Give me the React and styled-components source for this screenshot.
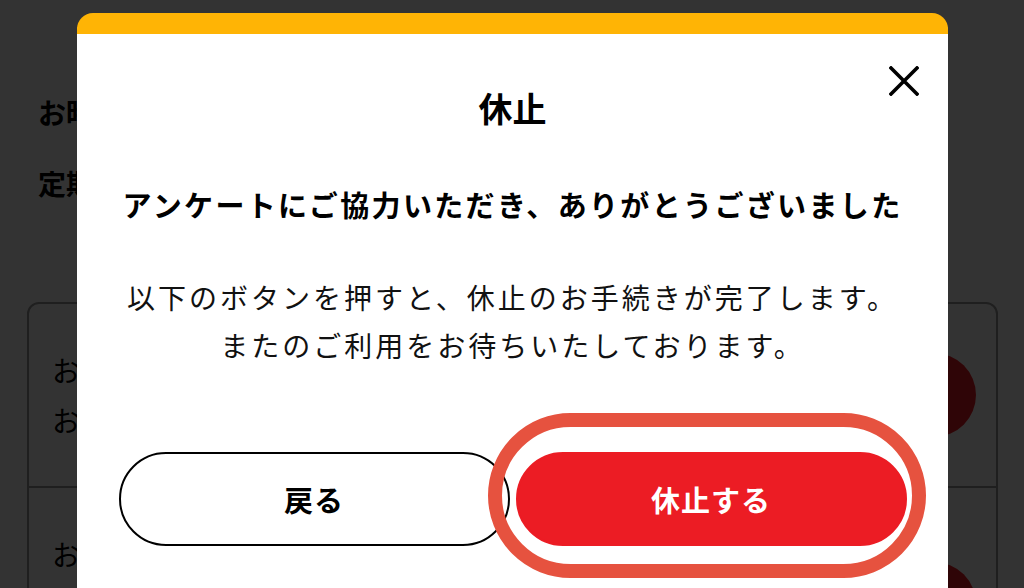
import React from "react";
import styled, { createGlobalStyle } from "styled-components";

const Global = createGlobalStyle`
  html, body { margin: 0; padding: 0; background: #fff; overflow: hidden; }
  body { font-family: "Noto Sans CJK JP", "Noto Sans", sans-serif; color: #000; }
  * { box-sizing: border-box; }
`;

const Page = styled.main`
  width: 1024px;
  height: 588px;
  padding: 92px 26px 0 27px;
  display: flex;
  flex-direction: column;
  overflow: hidden;
`;

const PageLine = styled.p`
  margin: 0 0 31px 11px;
  font-size: 28px;
  line-height: 40px;
  font-weight: 700;
  white-space: nowrap;
`;

const Card = styled.section`
  margin-top: 68px;
  border: 2px solid #999;
  border-radius: 12px;
  overflow: hidden;
  flex: none;
`;

const Row = styled.div`
  display: flex;
  align-items: center;
  justify-content: space-between;
  padding: 41px 20px 41px 23px;
  border-top: ${(p) => (p.$first ? "none" : "2px solid #999")};
`;

const RowText = styled.div`
  font-size: 28px;
  line-height: 50px;
  white-space: nowrap;
`;

const Dot = styled.span`
  width: 84px;
  height: 84px;
  border-radius: 50%;
  background: #ec1c24;
  flex: none;
`;

const Overlay = styled.div`
  position: fixed;
  inset: 0;
  background: rgba(0, 0, 0, 0.8);
  display: flex;
  justify-content: center;
  align-items: flex-start;
  padding-top: 13px;
`;

const Modal = styled.div`
  position: relative;
  width: 871px;
  min-height: 620px;
  background: #fff;
  border-top: 21px solid #ffb405;
  border-radius: 16px 16px 0 0;
  display: flex;
  flex-direction: column;
  align-items: center;
  padding: 50px 41px 0 42px;
`;

const Close = styled.button`
  position: absolute;
  top: 31px;
  right: 28px;
  width: 32px;
  height: 32px;
  padding: 0;
  border: none;
  background: transparent;
  display: flex;
  align-items: center;
  justify-content: center;
`;

const Title = styled.h2`
  margin: 0;
  font-size: 34px;
  line-height: 48px;
  font-weight: 700;
`;

const Heading = styled.p`
  margin: 50px 0 0;
  font-size: 29px;
  line-height: 44px;
  font-weight: 700;
  letter-spacing: 2.35px;
  white-space: nowrap;
`;

const Body = styled.p`
  margin: 47px 0 0;
  font-size: 28px;
  line-height: 48px;
  letter-spacing: 3px;
  text-align: center;
  color: #111;
  white-space: nowrap;
`;

const Buttons = styled.div`
  margin-top: 83px;
  width: 100%;
  display: grid;
  grid-template-columns: 1fr 1fr;
  gap: 6px;
`;

const Btn = styled.button`
  height: 94px;
  border-radius: 47px;
  font-family: inherit;
  font-size: 29px;
  font-weight: 700;
  letter-spacing: 1px;
  border: 2px solid ${(p) => (p.$primary ? "#ec1c24" : "#000")};
  background: ${(p) => (p.$primary ? "#ec1c24" : "#fff")};
  color: ${(p) => (p.$primary ? "#fff" : "#000")};
  width: 100%;
`;

const Highlight = styled.div`
  position: relative;
`;

const Ring = styled.span`
  position: absolute;
  left: -28px;
  right: -19px;
  top: -39px;
  bottom: -32px;
  border: 14px solid #e6523f;
  border-radius: 999px;
  pointer-events: none;
`;

export default function App() {
  return (
    <>
      <Global />
      <Page>
        <PageLine>お時間をいただきありがとうございます</PageLine>
        <PageLine>定期便の休止手続き</PageLine>
        <Card>
          <Row $first>
            <RowText>
              お届け日
              <br />
              お届け周期
            </RowText>
            <Dot />
          </Row>
          <Row>
            <RowText>
              お支払い方法
              <br />
              クレジットカード
              <br />
              変更する
            </RowText>
            <Dot />
          </Row>
        </Card>
      </Page>
      <Overlay>
        <Modal>
          <Close aria-label="閉じる">
            <svg width="30" height="30" viewBox="0 0 30 30">
              <path d="M2 2 L28 28 M28 2 L2 28" stroke="#000" strokeWidth="3.6" strokeLinecap="square" />
            </svg>
          </Close>
          <Title>休止</Title>
          <Heading>アンケートにご協力いただき、ありがとうございました</Heading>
          <Body>
            以下のボタンを押すと、休止のお手続きが完了します。
            <br />
            またのご利用をお待ちいたしております。
          </Body>
          <Buttons>
            <Btn>戻る</Btn>
            <Highlight>
              <Btn $primary>休止する</Btn>
              <Ring />
            </Highlight>
          </Buttons>
        </Modal>
      </Overlay>
    </>
  );
}
